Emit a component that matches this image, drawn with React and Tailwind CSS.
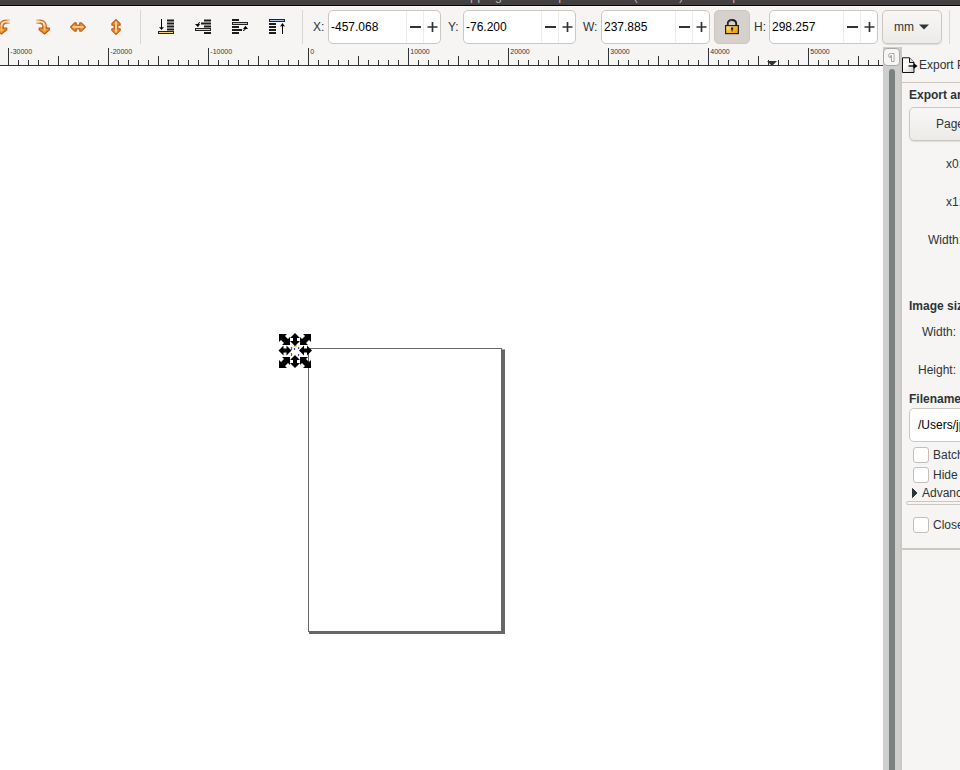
import React from "react";

const FONT = "font-['Liberation_Sans',Arial,sans-serif]";

function RotateArrow({ flip }) {
  return (
    <svg width="15" height="16" viewBox="0 0 15 16" className={flip ? "shrink-0 -scale-x-100" : "shrink-0"}>
      <defs>
        <linearGradient id="tail" x1="0" x2="1" y1="0" y2="0">
          <stop offset="0" stopColor="#d97a33" stopOpacity=".35" />
          <stop offset=".5" stopColor="#d06f2a" />
        </linearGradient>
      </defs>
      <path d="M1 2.7H5Q9.6 2.9 9.6 7.5V10" fill="none" stroke="url(#tail)" strokeWidth="4.4" />
      <path d="M1 2.7H5Q9.6 2.9 9.6 7.5V10" fill="none" stroke="#fbe3c2" strokeWidth="1.8" />
      <path d="M4.2 9.2H7.7V8H11.5V9.2H14.4V10.8L9.6 15L4.2 10.8Z" fill="#ee942c" stroke="#bb5a18" strokeWidth="1.2" strokeLinejoin="round" />
      <path d="M9.6 6V12" stroke="#fbc56b" strokeWidth="1.7" />
    </svg>
  );
}

function FlipArrow({ vertical }) {
  return (
    <svg width="16" height="16" viewBox="0 0 16 16" className={vertical ? "shrink-0 rotate-90" : "shrink-0"}>
      <path
        d="M.6 8L4.6 3.9H6.2V6.2H9.8V3.9H11.4L15.4 8L11.4 12.1H9.8V9.8H6.2V12.1H4.6Z"
        fill="#ee942c"
        stroke="#c4601c"
        strokeWidth="1.3"
        strokeLinejoin="round"
      />
      <path d="M2.5 8H13.5" stroke="#fee0ad" strokeWidth="1.5" />
    </svg>
  );
}

const stripe = { stroke: "#1c1c1c", strokeWidth: 2 };

function LowerBottom() {
  return (
    <svg width="16" height="16" viewBox="0 0 16 16" className="shrink-0">
      <path d="M9 1.5H16M9 4.5H16M9 7.5H16M9 10.5H16" {...stripe} />
      <path d="M3.5 0V9" stroke="#000" />
      <path d="M1 8L3.5 8.5L6 8L3.5 11Z" fill="#000" />
      <rect x=".5" y="12.5" width="15" height="2" fill="#fcd860" stroke="#222" />
    </svg>
  );
}
function LowerOne() {
  return (
    <svg width="16" height="16" viewBox="0 0 16 16" className="shrink-0">
      <path d="M9 1.5H16M6 4.5H16M9 7.5H16M9 14H16" {...stripe} />
      <path d="M5 3.5Q3 3.5 3 6" fill="none" stroke="#000" />
      <path d="M0 5L5 5L3 8.2Z" fill="#000" />
      <rect x=".5" y="9.5" width="15" height="2" fill="#fcd860" stroke="#222" />
    </svg>
  );
}
function RaiseOne() {
  return (
    <svg width="16" height="16" viewBox="0 0 16 16" className="shrink-0">
      <path d="M0 1H7M0 8H7M0 11H10M0 14H7" {...stripe} />
      <path d="M11 11.5Q13.5 11.5 13.5 9" fill="none" stroke="#000" />
      <path d="M11 10L13.5 6.8L16 10Z" fill="#000" />
      <rect x=".5" y="3.5" width="15" height="2" fill="#adc8ee" stroke="#222" />
    </svg>
  );
}
function RaiseTop() {
  return (
    <svg width="16" height="16" viewBox="0 0 16 16" className="shrink-0">
      <path d="M0 5H7M0 8H7M0 11H7M0 14H7" {...stripe} />
      <path d="M13.5 6V15" stroke="#000" />
      <path d="M11 7.5L13.5 4L16 7.5L13.5 7Z" fill="#000" />
      <rect x=".5" y=".5" width="15" height="2" fill="#adc8ee" stroke="#222" />
    </svg>
  );
}

function Spin({ value, className }) {
  return (
    <div className={`flex h-[34px] shrink-0 overflow-hidden rounded-[5px] border border-[#cdc7c2] bg-white ${className}`}>
      <span className="flex-1 pl-0.5 text-[12px] leading-[32px] text-black">{value}</span>
      <span className="flex w-[17px] items-center justify-center border-l border-[#eeecea]">
        <svg width="11" height="12" viewBox="0 0 11 12"><path d="M0 6H11" stroke="#2e3436" strokeWidth="1.8" /></svg>
      </span>
      <span className="flex w-[17px] items-center justify-center border-l border-[#eeecea]">
        <svg width="11" height="12" viewBox="0 0 11 12"><path d="M.5 6H10.5M5.5 1V11" stroke="#2e3436" strokeWidth="1.7" /></svg>
      </span>
    </div>
  );
}

function Lock() {
  return (
    <svg width="14" height="16" viewBox="0 0 14 16">
      <defs>
        <linearGradient id="gold" x1="0" y1="0" x2="1" y2="1">
          <stop offset="0" stopColor="#fff0a0" />
          <stop offset=".5" stopColor="#fbb92f" />
          <stop offset="1" stopColor="#ee8a10" />
        </linearGradient>
      </defs>
      <path d="M2.8 7V4.7Q3 1 7 1T11.2 4.7V7" fill="none" stroke="#1c1c1c" strokeWidth="1.9" />
      <path d="M3.2 6V4.6Q3.6 1.4 7 1.4" fill="none" stroke="#777" strokeWidth=".6" />
      <rect x=".6" y="6.6" width="12.8" height="8" fill="url(#gold)" stroke="#222" strokeWidth="1.2" />
      <path d="M6 8.5H8.2V10.4H7.6V12.6H6.6V10.4H6Z" fill="#1c1c1c" />
    </svg>
  );
}

function Ruler() {
  const ticks = [];
  for (let i = 0; i <= 87; i++) {
    const x = 8.5 + i * 10;
    const top = i % 10 === 0 ? 1 : i % 5 === 0 ? 9 : 13;
    ticks.push(<path key={i} d={`M${x} ${top}V18`} stroke="#2e3436" />);
  }
  const labels = ["-30000", "-20000", "-10000", "0", "10000", "20000", "30000", "40000", "50000"];
  return (
    <svg width="883" height="19" className="block shrink-0">
      {ticks}
      <path d="M0 18.5H883" stroke="#2e3436" />
      <path d="M767 14H777L772 19Z" fill="#2e3436" />
      {labels.map((l, i) => (
        <text key={l} x={10.3 + i * 100} y="7" fontSize="7" fill="#2e3436" fontFamily="Liberation Sans, Arial, sans-serif">{l}</text>
      ))}
    </svg>
  );
}

const DIAG = "0,0 8,0 6,2 9,5 11,3 11,11 3,11 5,9 2,6 0,8";
const VERT = "5,0 10,5 7,5 7,8 10,8 5,13 0,8 3,8 3,5 0,5";

function Handles() {
  return (
    <svg width="36" height="36" className="absolute left-[278px] top-[267px]">
      <rect x="13" y="13" width="8" height="10" fill="#fff" />
      <path d="M13.5 14V17M13.5 20V23M20.5 14V16M20.5 21V23M16.5 15V17" stroke="#3b4de8" strokeWidth="1.2" />
      <path d="M16 13H19" stroke="#e3cf43" strokeWidth="1.5" />
      <polygon points={DIAG} transform="translate(1 1)" />
      <polygon points={DIAG} transform="translate(33 1) scale(-1 1)" />
      <polygon points={DIAG} transform="translate(1 35) scale(1 -1)" />
      <polygon points={DIAG} transform="translate(33 35) scale(-1 -1)" />
      <polygon points={VERT} transform="translate(12 0)" />
      <polygon points={VERT} transform="translate(12 22)" />
      <polygon points={VERT} transform="translate(13.5 12.5) rotate(90)" />
      <polygon points={VERT} transform="translate(34 12.5) rotate(90)" />
    </svg>
  );
}

function Check({ label, className }) {
  return (
    <div className={`ml-[11px] flex h-4 items-center gap-1 ${className}`}>
      <span className="size-4 shrink-0 rounded-[3px] border border-[#c4beb8] bg-white" />
      <span>{label}</span>
    </div>
  );
}

function ExportPanel() {
  return (
    <aside className="flex w-[58px] shrink-0 flex-col overflow-hidden whitespace-nowrap bg-[#f6f5f4] text-[12px] leading-4 text-[#2e3436]">
      <div className="flex h-[35px] shrink-0 items-center pt-px">
        <svg width="17" height="17" viewBox="0 0 17 17" className="shrink-0">
          <defs>
            <linearGradient id="sheet" x1="0" y1="0" x2="1" y2="1">
              <stop offset=".4" stopColor="#fff" />
              <stop offset="1" stopColor="#ccc" />
            </linearGradient>
          </defs>
          <path d="M.5 .8H7.5L12 5.5V15.5H.5Z" fill="url(#sheet)" stroke="#111" />
          <path d="M7.5 .8V5.5H12" fill="#ddd" stroke="#111" />
          <path d="M6.5 9H14" stroke="#000" strokeWidth="1.3" />
          <path d="M11.5 6L15.5 9L11.5 12Z" fill="#000" />
        </svg>
        <span>Export PNG Image (Shift+Ctrl+E)</span>
      </div>
      <div className="flex h-[468px] shrink-0 flex-col border-b-2 border-t border-[#cdc7c2]">
        <b className="ml-[7px] mt-[4px]">Export area</b>
        <div className="ml-[7px] mt-[4px] h-[34px] w-[90px] rounded-[5px] border border-[#cdc7c2] bg-gradient-to-b from-[#f8f7f6] to-[#edebe9] pl-[26px] leading-[32px] shadow-[0_1px_1px_#dedbd8]">Page</div>
        <div className="mt-[15px] w-[60px] text-right">x0:</div>
        <div className="mt-[22px] w-[60px] text-right">x1:</div>
        <div className="mt-[22px] w-[60px] text-right">Width:</div>
        <b className="ml-[7px] mt-[50px]">Image size</b>
        <div className="mt-[10px] w-[54px] text-right">Width:</div>
        <div className="mt-[22px] w-[54px] text-right">Height:</div>
        <b className="ml-[7px] mt-[13px]">Filename</b>
        <div className="ml-[7px] mt-[1px] h-[34px] w-[200px] shrink-0 rounded-[5px] border border-[#cdc7c2] bg-white pl-2 leading-[32px] text-black">/Users/jpg</div>
        <Check label="Batch export" className="mt-[5px]" />
        <Check label="Hide all except selected" className="mt-1" />
        <div className="ml-[10px] mt-[2px] flex h-4 items-center">
          <svg width="10" height="10" viewBox="0 0 10 10" className="shrink-0"><path d="M.5 .5L5 5L.5 9.5Z" fill="#2e3436" stroke="#2e3436" /></svg>
          <span>Advanced</span>
        </div>
        <div className="ml-1 mt-0 h-1 w-[80px] shrink-0 rounded-sm border border-[#cdc7c2]" />
        <Check label="Close when complete" className="mt-[12px]" />
      </div>
    </aside>
  );
}

export default function App() {
  return (
    <div className={`flex h-[770px] w-[960px] flex-col overflow-hidden bg-[#f6f5f4] text-[#2e3436] ${FONT}`}>
      <header className="h-[6px] shrink-0 overflow-hidden border-b border-black bg-[#443f41] pl-[452px]">
        <span className="-mt-[12px] block whitespace-nowrap text-[13px] leading-4 text-[#b5b2b3]">
          Mapping-area-template 1 2019 (Outline) - Inkscape
        </span>
      </header>

      <div className="flex h-[41px] shrink-0 items-center pt-px text-[12px]">
        <div className="-ml-1 flex w-[144px] shrink-0 items-center">
          <RotateArrow flip />
          <span className="w-[24px]" />
          <RotateArrow />
          <span className="w-[20px]" />
          <FlipArrow />
          <span className="w-[22px]" />
          <FlipArrow vertical />
        </div>
        <div className="h-[34px] w-px shrink-0 bg-[#d9d6d3]" />
        <div className="flex w-[161px] shrink-0 items-center gap-[21px] pl-[17px]">
          <LowerBottom />
          <LowerOne />
          <RaiseOne />
          <RaiseTop />
        </div>
        <div className="h-[34px] w-px shrink-0 bg-[#d9d6d3]" />
        <span className="w-[25px] shrink-0 pl-[10px]">X:</span>
        <Spin value="-457.068" className="w-[113px]" />
        <span className="w-[22px] shrink-0 pl-[7px]">Y:</span>
        <Spin value="-76.200" className="w-[113px]" />
        <span className="w-[25px] shrink-0 pl-[7px]">W:</span>
        <Spin value="237.885" className="w-[109px]" />
        <div className="ml-1 flex h-[34px] w-9 shrink-0 items-center justify-center rounded-[5px] border border-[#cdc7c2] bg-[#d6d1cd]">
          <Lock />
        </div>
        <span className="w-[19px] shrink-0 pl-1">H:</span>
        <Spin value="298.257" className="w-[109px]" />
        <div className="ml-1 flex h-[34px] w-[60px] shrink-0 items-center gap-[5px] rounded-[5px] border border-[#cdc7c2] bg-gradient-to-b from-[#f8f7f6] to-[#edebe9] pl-[11px] shadow-[0_1px_1px_#dedbd8]">
          mm
          <svg width="10" height="6"><path d="M0 .5H10L5 5.5Z" fill="#2e3436" /></svg>
        </div>
        <div className="ml-[7px] h-[34px] w-px shrink-0 bg-[#d9d6d3]" />
      </div>

      <div className="flex min-h-0 flex-1">
        <main className="flex w-[883px] shrink-0 flex-col">
          <Ruler />
          <div className="relative flex-1 overflow-hidden bg-white">
            <div className="absolute left-[309px] top-[283px] h-[285px] w-[196px] border-t border-[#aaa] bg-[#666]" />
            <div className="absolute left-[308px] top-[282px] h-[284px] w-[194px] border border-[#666] bg-white" />
            <Handles />
          </div>
        </main>
        <div className="flex w-[19px] shrink-0 flex-col items-center border-r-2 border-[#cdc7c2] bg-[#cecece]">
          <div className="mt-px flex h-[18px] w-[17px] shrink-0 items-center justify-center rounded-[4px] border border-[#aaa6a2] bg-[#f6f5f4]">
            <svg width="7" height="9" viewBox="0 0 7 9"><path d="M2.5 4.5Q.5 4.5 .5 2.5T2.5 .5H6V8.5H3.5V2.5H2.5Z" fill="#fff" stroke="#8f8f8f" strokeWidth=".8" /></svg>
          </div>
          <div className="mt-[3px] w-[6px] flex-1 rounded-t-full bg-[#7c8181]" />
        </div>
        <ExportPanel />
      </div>
    </div>
  );
}
